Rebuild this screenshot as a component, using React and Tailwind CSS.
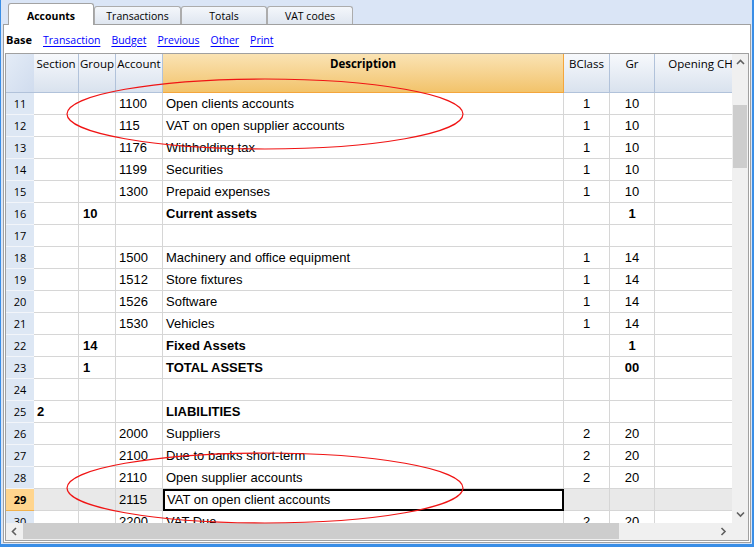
import React from "react";

const ui = "font-['Open_Sans',sans-serif]";
const cellFont = "font-['Liberation_Sans',Arial,sans-serif]";

// widths of the grid columns (row no., Section, Group, Account, Description, BClass, Gr, Opening CHF)
const cols = ["w-[28px]", "w-[45px]", "w-[37px]", "w-[47px]", "w-[401px]", "w-[46px]", "w-[45px]", "w-[98px]"];

const rows = [
  { n: 11, acc: "1100", desc: "Open clients accounts", bc: "1", gr: "10" },
  { n: 12, acc: "115", desc: "VAT on open supplier accounts", bc: "1", gr: "10" },
  { n: 13, acc: "1176", desc: "Withholding tax", bc: "1", gr: "10" },
  { n: 14, acc: "1199", desc: "Securities", bc: "1", gr: "10" },
  { n: 15, acc: "1300", desc: "Prepaid expenses", bc: "1", gr: "10" },
  { n: 16, grp: "10", desc: "Current assets", gr: "1", bold: true },
  { n: 17 },
  { n: 18, acc: "1500", desc: "Machinery and office equipment", bc: "1", gr: "14" },
  { n: 19, acc: "1512", desc: "Store fixtures", bc: "1", gr: "14" },
  { n: 20, acc: "1526", desc: "Software", bc: "1", gr: "14" },
  { n: 21, acc: "1530", desc: "Vehicles", bc: "1", gr: "14" },
  { n: 22, grp: "14", desc: "Fixed Assets", gr: "1", bold: true },
  { n: 23, grp: "1", desc: "TOTAL ASSETS", gr: "00", bold: true },
  { n: 24 },
  { n: 25, sec: "2", desc: "LIABILITIES", bold: true },
  { n: 26, acc: "2000", desc: "Suppliers", bc: "2", gr: "20" },
  { n: 27, acc: "2100", desc: "Due to banks short-term", bc: "2", gr: "20" },
  { n: 28, acc: "2110", desc: "Open supplier accounts", bc: "2", gr: "20" },
  { n: 29, acc: "2115", desc: "VAT on open client accounts", current: true },
  { n: 30, acc: "2200", desc: "VAT Due", bc: "2", gr: "20" },
];

function Chevron({ dir }) {
  const d = {
    up: "M1 5 L4.5 1.5 L8 5",
    down: "M1 1.5 L4.5 5 L8 1.5",
    left: "M5 1 L1.5 4.5 L5 8",
    right: "M1.5 1 L5 4.5 L1.5 8",
  }[dir];
  const horiz = dir === "up" || dir === "down";
  return (
    <svg width={horiz ? 9 : 7} height={horiz ? 7 : 9}>
      <path d={d} fill="none" stroke="#606060" strokeWidth="1.6" />
    </svg>
  );
}

function Tab({ label, active, w }) {
  if (active) {
    return (
      <div className={`relative z-10 ${w} h-[22px] -mb-px bg-white border border-b-0 border-[#a3a3a3] rounded-t-[3px] flex justify-center pt-[5px] text-[10.5px] font-bold text-black`}>
        {label}
      </div>
    );
  }
  return (
    <div className={`${w} h-[18px] border border-b-0 border-[#acacac] rounded-t-[3px] bg-linear-to-b from-[#f4f7fb] to-[#dfe6f0] flex justify-center pt-[2px] text-[10.5px] text-black`}>
      {label}
    </div>
  );
}

function HeaderRow() {
  const h = "h-[39px] shrink-0 border-b border-r border-[#b1c2da] bg-linear-to-b from-[#f7f9fc] to-[#d9e2ee] text-center pt-[2px] leading-[16px]";
  return (
    <div className={`flex w-max ${ui} text-[11.5px] text-black`}>
      <div className={`${cols[0]} h-[39px] shrink-0 border-b border-[#b1c2da] bg-linear-to-br from-[#e4ecf7] to-[#d0dcee]`} />
      <div className={`${cols[1]} ${h}`}>Section</div>
      <div className={`${cols[2]} ${h}`}>Group</div>
      <div className={`${cols[3]} ${h}`}>Account</div>
      <div className={`${cols[4]} h-[39px] shrink-0 border-b border-r border-[#f4a63c] bg-linear-to-b from-[#fae3b3] to-[#f2c36a] text-center pt-[2px] leading-[16px] font-bold`}>
        Description
      </div>
      <div className={`${cols[5]} ${h}`}>BClass</div>
      <div className={`${cols[6]} ${h}`}>Gr</div>
      <div className={`${cols[7]} ${h} whitespace-nowrap`}>Opening CHF</div>
    </div>
  );
}

function Row({ r }) {
  const base = "h-[22px] shrink-0 border-b border-r border-[#d6d6d6] leading-[21px] whitespace-nowrap overflow-hidden";
  const bg = r.current ? "bg-[#e9e9e9]" : "bg-white";
  const wt = r.bold ? "font-bold" : "";
  return (
    <div className={`flex w-max ${cellFont} text-[13px] text-black`}>
      <div
        className={`${cols[0]} h-[22px] shrink-0 border-b text-center leading-[21px] ${ui} text-[11px] ${
          r.current ? "bg-[#ffd58e] border-[#f1b24f] font-bold" : "bg-[#dde7f4] border-[#f2f5fa]"
        }`}
      >
        {r.n}
      </div>
      <div className={`${cols[1]} ${base} ${bg} ${wt} pl-[3px]`}>{r.sec}</div>
      <div className={`${cols[2]} ${base} ${bg} ${wt} pl-[4px]`}>{r.grp}</div>
      <div className={`${cols[3]} ${base} ${bg} pl-[3px]`}>{r.acc}</div>
      {r.current ? (
        <div className={`${cols[4]} h-[22px] shrink-0 border-2 border-black bg-white leading-[18px] pl-[2px] whitespace-nowrap`}>
          {r.desc}
        </div>
      ) : (
        <div className={`${cols[4]} ${base} ${bg} ${wt} pl-[3px]`}>{r.desc}</div>
      )}
      <div className={`${cols[5]} ${base} ${bg} text-center`}>{r.bc}</div>
      <div className={`${cols[6]} ${base} ${bg} ${wt} text-center`}>{r.gr}</div>
      <div className={`${cols[7]} ${base} ${bg}`} />
    </div>
  );
}

export default function App() {
  return (
    <div className={`relative w-[754px] h-[547px] overflow-hidden bg-[#dae5f6] border-l border-r-2 border-b-[3px] border-[#3a8ee6] pl-[2px] pr-px pb-px flex flex-col ${ui}`}>
      {/* tab strip */}
      <div className="h-[24px] shrink-0 flex items-end pl-[5px]">
        <Tab label="Accounts" active w="w-[86px]" />
        <Tab label="Transactions" w="w-[87px]" />
        <Tab label="Totals" w="w-[86px]" />
        <Tab label="VAT codes" w="w-[86px]" />
      </div>

      {/* panel */}
      <div className="flex-1 min-h-0 flex flex-col bg-white border border-[#a0a0a0] px-px pb-px">
        <div className="h-[28px] shrink-0 flex items-center gap-[11px] pl-px pt-[3px] text-[10.5px]">
          <span className="font-bold text-black text-[11px]">Base</span>
          {["Transaction", "Budget", "Previous", "Other", "Print"].map((l) => (
            <a key={l} className="text-[#0000ff] underline underline-offset-[2px] cursor-pointer">
              {l}
            </a>
          ))}
        </div>

        {/* grid */}
        <div className="flex-1 min-h-0 flex flex-col border border-[#a0a0a0]">
          <div className="flex-1 min-h-0 flex">
            <div className="flex-1 min-w-0 overflow-hidden">
              <HeaderRow />
              {rows.map((r) => (
                <Row key={r.n} r={r} />
              ))}
            </div>
            <div className="w-[16px] shrink-0 bg-[#f0f0f0] flex flex-col">
              <div className="h-[17px] flex items-center justify-center">
                <Chevron dir="up" />
              </div>
              <div className="mt-[34px] h-[63px] mx-px bg-[#cdcdcd]" />
              <div className="flex-1" />
              <div className="h-[17px] flex items-center justify-center">
                <Chevron dir="down" />
              </div>
            </div>
          </div>
          <div className="h-[17px] shrink-0 flex">
            <div className="flex-1 flex bg-[#f0f0f0]">
              <div className="w-[17px] flex items-center justify-center">
                <Chevron dir="left" />
              </div>
              <div className="w-[596px] mb-px bg-[#cdcdcd]" />
              <div className="flex-1" />
              <div className="w-[17px] flex items-center justify-center">
                <Chevron dir="right" />
              </div>
            </div>
            <div className="w-[16px] bg-[#f0f0f0]" />
          </div>
        </div>
      </div>

      {/* red annotation marks */}
      <svg className="absolute -left-px top-0 pointer-events-none" width="754" height="547">
        <ellipse cx="265" cy="114" rx="198" ry="35" fill="none" stroke="#f01414" strokeWidth="1.2" />
        <ellipse cx="265" cy="488" rx="198" ry="35" fill="none" stroke="#f01414" strokeWidth="1.2" />
      </svg>
    </div>
  );
}
